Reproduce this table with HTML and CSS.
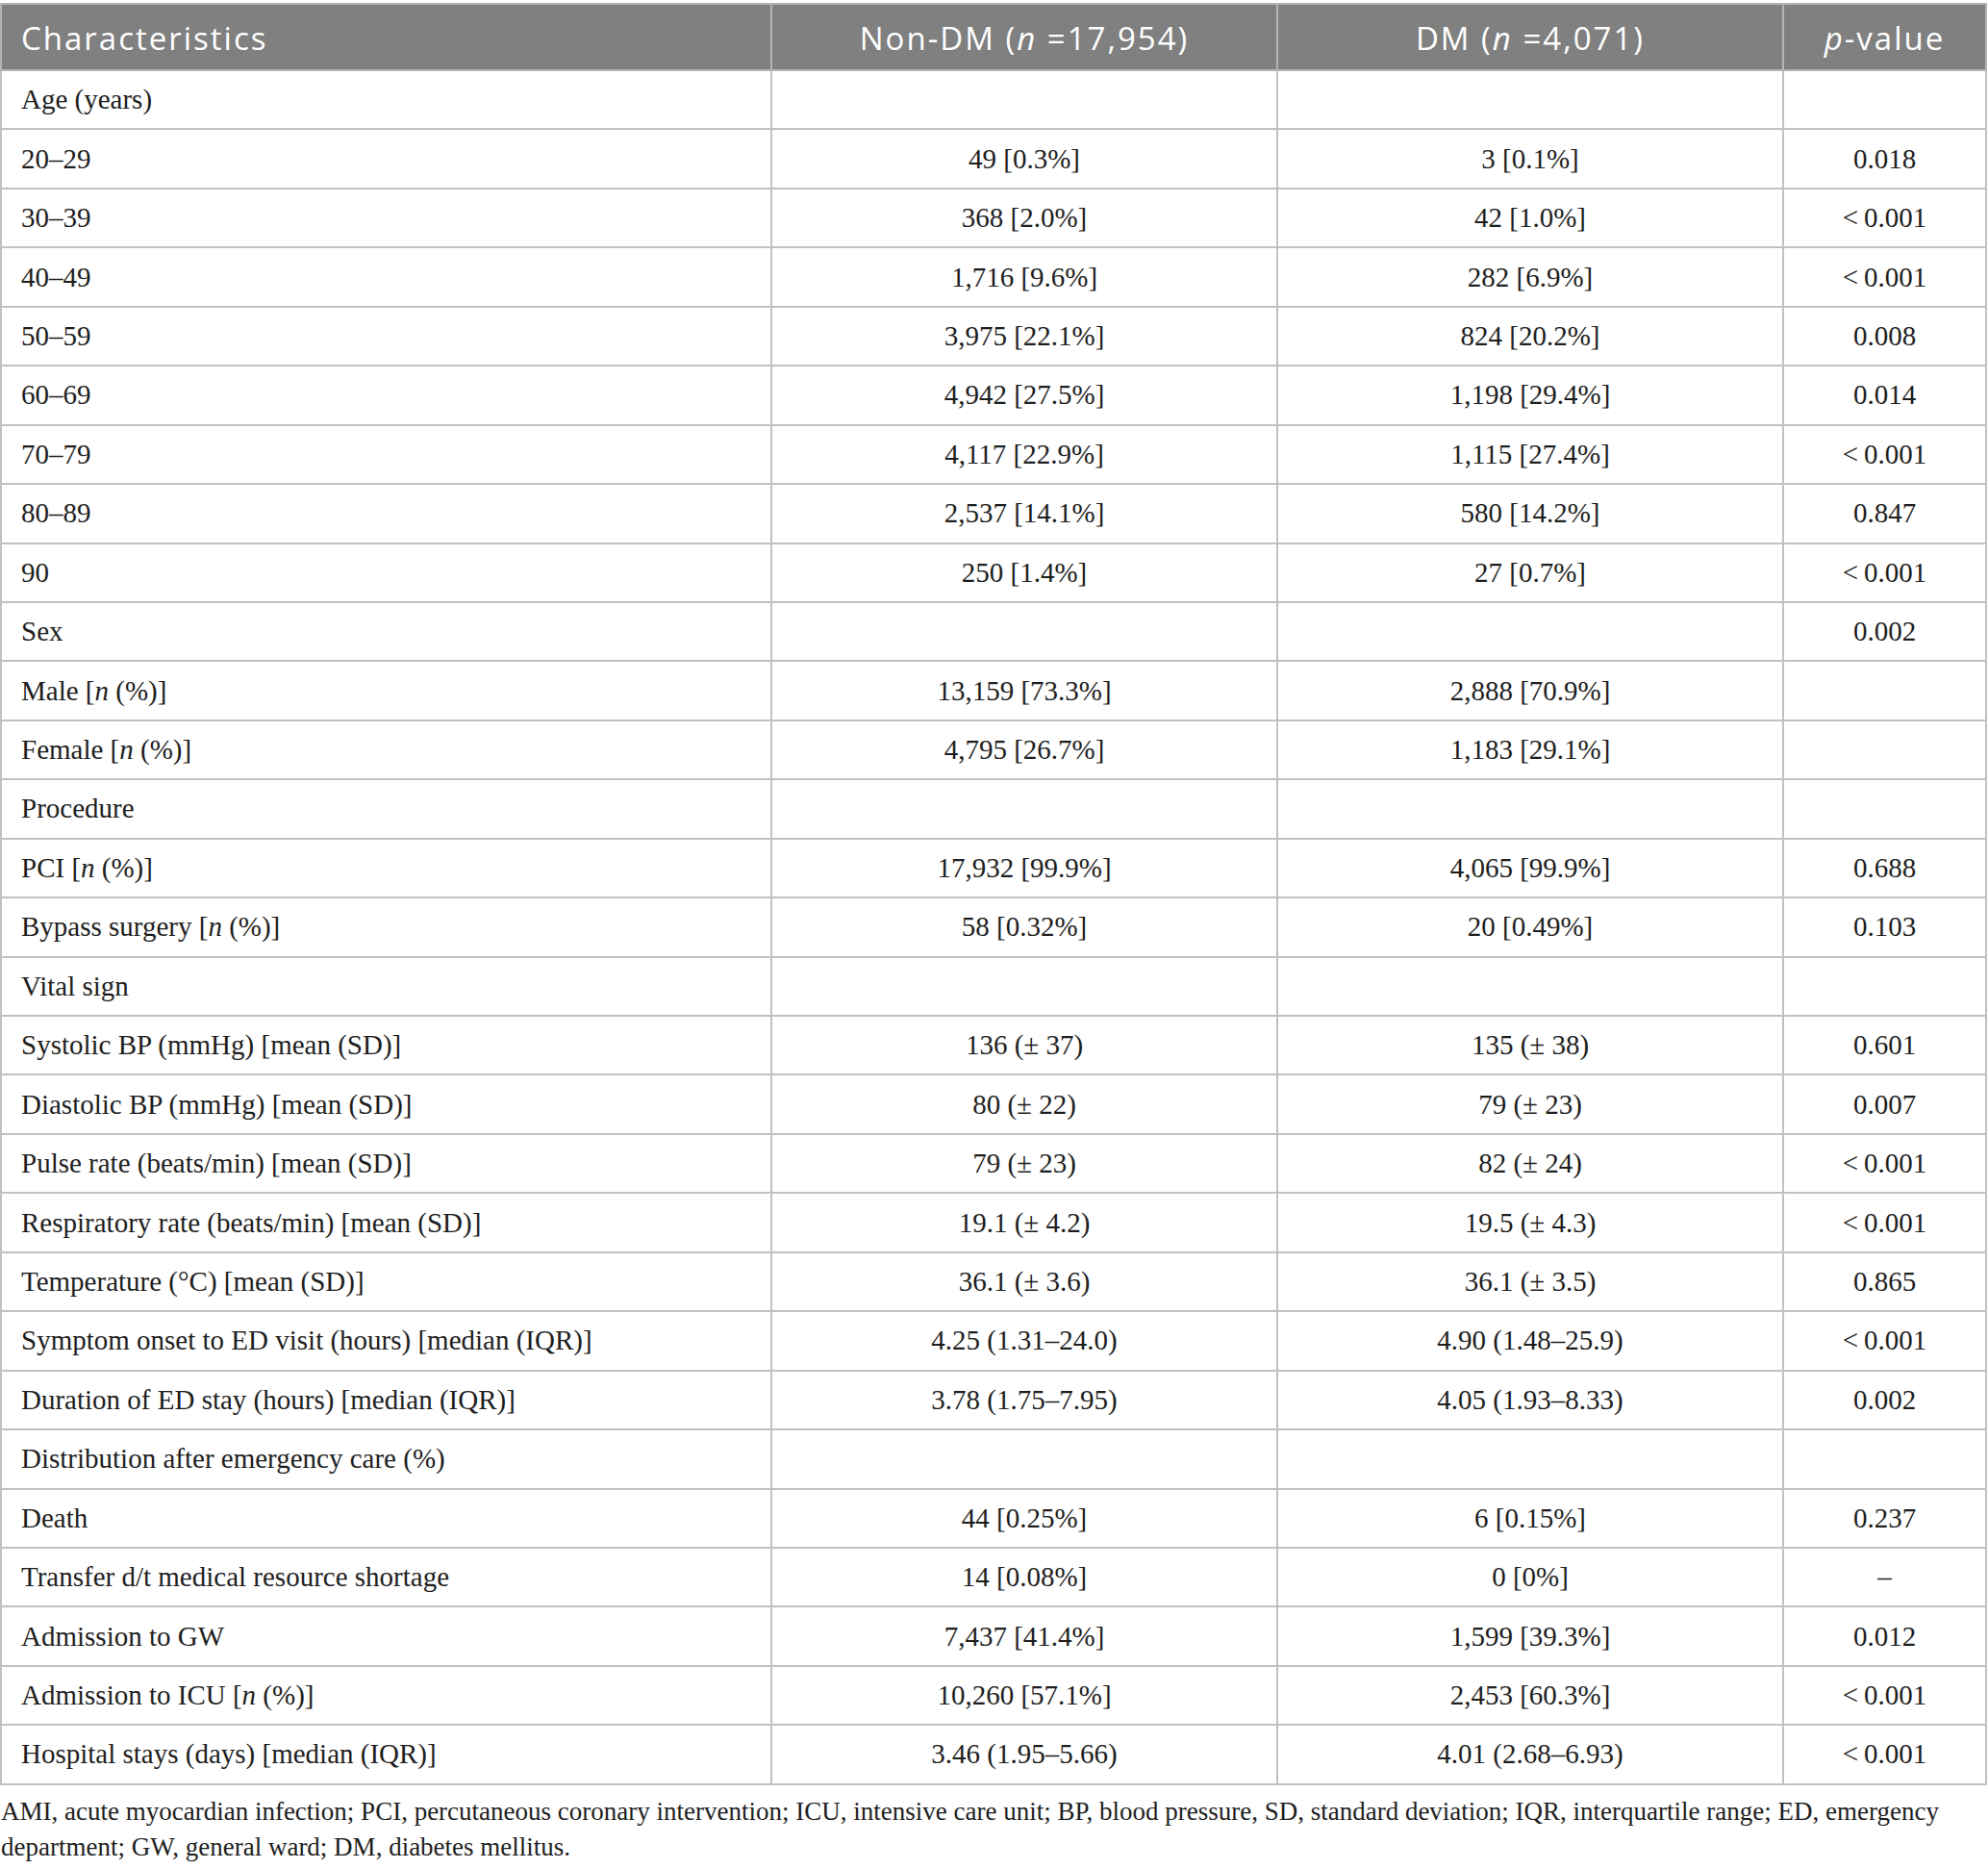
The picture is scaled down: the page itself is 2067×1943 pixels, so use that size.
FILE: index.html
```html
<!doctype html>
<html>
<head>
<meta charset="utf-8">
<title>Baseline characteristics</title>
<link rel="stylesheet" href="styles.css">
</head>
<body>
<div class="wrap">
	<table class="tbl">
		<colgroup>
			<col class="c1">
			<col class="c2">
			<col class="c3">
			<col class="c4">
		</colgroup>
		<thead>
			<tr>
				<th class="first">Characteristics</th>
				<th>Non-DM (<i>n</i> =17,954)</th>
				<th>DM (<i>n</i> =4,071)</th>
				<th><i>p</i>-value</th>
			</tr>
		</thead>
		<tbody>
			<tr><td>Age (years)</td><td></td><td></td><td></td></tr>
			<tr><td>20–29</td><td>49 [0.3%]</td><td>3 [0.1%]</td><td>0.018</td></tr>
			<tr><td>30–39</td><td>368 [2.0%]</td><td>42 [1.0%]</td><td>&lt;&thinsp;0.001</td></tr>
			<tr><td>40–49</td><td>1,716 [9.6%]</td><td>282 [6.9%]</td><td>&lt;&thinsp;0.001</td></tr>
			<tr><td>50–59</td><td>3,975 [22.1%]</td><td>824 [20.2%]</td><td>0.008</td></tr>
			<tr><td>60–69</td><td>4,942 [27.5%]</td><td>1,198 [29.4%]</td><td>0.014</td></tr>
			<tr><td>70–79</td><td>4,117 [22.9%]</td><td>1,115 [27.4%]</td><td>&lt;&thinsp;0.001</td></tr>
			<tr><td>80–89</td><td>2,537 [14.1%]</td><td>580 [14.2%]</td><td>0.847</td></tr>
			<tr><td>90</td><td>250 [1.4%]</td><td>27 [0.7%]</td><td>&lt;&thinsp;0.001</td></tr>
			<tr><td>Sex</td><td></td><td></td><td>0.002</td></tr>
			<tr><td>Male [<i>n</i> (%)]</td><td>13,159 [73.3%]</td><td>2,888 [70.9%]</td><td></td></tr>
			<tr><td>Female [<i>n</i> (%)]</td><td>4,795 [26.7%]</td><td>1,183 [29.1%]</td><td></td></tr>
			<tr><td>Procedure</td><td></td><td></td><td></td></tr>
			<tr><td>PCI [<i>n</i> (%)]</td><td>17,932 [99.9%]</td><td>4,065 [99.9%]</td><td>0.688</td></tr>
			<tr><td>Bypass surgery [<i>n</i> (%)]</td><td>58 [0.32%]</td><td>20 [0.49%]</td><td>0.103</td></tr>
			<tr><td>Vital sign</td><td></td><td></td><td></td></tr>
			<tr><td>Systolic BP (mmHg) [mean (SD)]</td><td>136 (± 37)</td><td>135 (± 38)</td><td>0.601</td></tr>
			<tr><td>Diastolic BP (mmHg) [mean (SD)]</td><td>80 (± 22)</td><td>79 (± 23)</td><td>0.007</td></tr>
			<tr><td>Pulse rate (beats/min) [mean (SD)]</td><td>79 (± 23)</td><td>82 (± 24)</td><td>&lt;&thinsp;0.001</td></tr>
			<tr><td>Respiratory rate (beats/min) [mean (SD)]</td><td>19.1 (± 4.2)</td><td>19.5 (± 4.3)</td><td>&lt;&thinsp;0.001</td></tr>
			<tr><td>Temperature (°C) [mean (SD)]</td><td>36.1 (± 3.6)</td><td>36.1 (± 3.5)</td><td>0.865</td></tr>
			<tr><td>Symptom onset to ED visit (hours) [median (IQR)]</td><td>4.25 (1.31–24.0)</td><td>4.90 (1.48–25.9)</td><td>&lt;&thinsp;0.001</td></tr>
			<tr><td>Duration of ED stay (hours) [median (IQR)]</td><td>3.78 (1.75–7.95)</td><td>4.05 (1.93–8.33)</td><td>0.002</td></tr>
			<tr><td>Distribution after emergency care (%)</td><td></td><td></td><td></td></tr>
			<tr><td>Death</td><td>44 [0.25%]</td><td>6 [0.15%]</td><td>0.237</td></tr>
			<tr><td>Transfer d/t medical resource shortage</td><td>14 [0.08%]</td><td>0 [0%]</td><td>–</td></tr>
			<tr><td>Admission to GW</td><td>7,437 [41.4%]</td><td>1,599 [39.3%]</td><td>0.012</td></tr>
			<tr><td>Admission to ICU [<i>n</i> (%)]</td><td>10,260 [57.1%]</td><td>2,453 [60.3%]</td><td>&lt;&thinsp;0.001</td></tr>
			<tr><td>Hospital stays (days) [median (IQR)]</td><td>3.46 (1.95–5.66)</td><td>4.01 (2.68–6.93)</td><td>&lt;&thinsp;0.001</td></tr>
		</tbody>
	</table>
	<p class="note">AMI, acute myocardian infection; PCI, percutaneous coronary intervention; ICU, intensive care unit; BP, blood pressure, SD, standard deviation; IQR, interquartile range; ED, emergency department; GW, general ward; DM, diabetes mellitus.</p>
</div>
</body>
</html>
```

FILE: styles.css
```css
body{ margin:0; background:#fff; color:#1e1e1e; font-family:"Liberation Serif","Times New Roman",serif;}
.wrap{ width:2066px; padding-top:3px;}
.tbl{ width:100%; border-collapse:collapse; table-layout:fixed;}
.tbl .c1{ width:801px;}
.tbl .c2, .tbl .c3{ width:526px;}
.tbl th, .tbl td{ border:2px solid #c1c1c1; padding:0; vertical-align:middle; text-align:center;}
.tbl thead tr{ height:69px;}
.tbl th{ background:#7f807f; color:#fff; font-family:"Open Sans","Noto Sans",sans-serif; font-weight:400; font-size:33px; letter-spacing:2px; padding-top:2px; border-color:#b4b4b4;}
.tbl th.first{ text-align:left; padding-left:20px;}
.tbl tbody tr{ height:61.45px;}
.tbl td{ font-size:29px;}
.tbl td:first-child{ text-align:left; padding-left:20px;}
.note{ margin:9px 0 0 1px; font-size:27px; line-height:37px; width:2040px;}
```
